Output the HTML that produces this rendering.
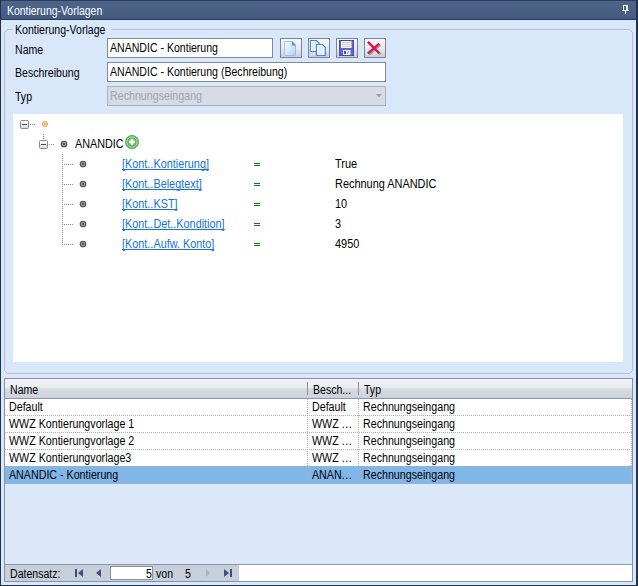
<!DOCTYPE html>
<html><head><meta charset="utf-8">
<style>
*{margin:0;padding:0;box-sizing:border-box}
html,body{width:638px;height:586px;overflow:hidden}
body{position:relative;background:#d8e8fa;font-family:"Liberation Sans",sans-serif;font-size:11px;color:#000}
.a{position:absolute}
.t{position:absolute;white-space:nowrap;font-size:12px;line-height:14px;transform:scaleX(0.88);transform-origin:0 0}
#title{left:0;top:0;width:638px;height:20px;background:linear-gradient(#4e6489,#435a80);border-top:1px solid #2c3d58}
#titleline{left:0;top:18px;width:638px;height:1px;background:#2a3a55}
#bl{left:0;top:0;width:1px;height:586px;background:#22324d}
#br{left:636px;top:0;width:2px;height:586px;background:#22324d}
#bb{left:0;top:585px;width:638px;height:1px;background:#22324d}
.grp{left:4px;top:29px;width:629px;height:345px;border:1px solid #b9bec6;border-radius:3px}
.inp{background:#fff;border:1px solid #7d8a9c}
.btn{width:22px;height:20px;border:1px solid #7b8595;background:linear-gradient(#f7f7f9 0%,#ececf0 50%,#c9ced7 100%)}
#tree{left:13px;top:114px;width:610px;height:248px;background:#fff}
.lnk{transform:scaleX(0.905)!important;color:#1473d8;text-decoration:underline;text-decoration-skip-ink:none}
.eq{color:#0a8a0a}
.dot{position:absolute;border-color:#8a8a8a}
</style></head><body>
<div id="title" class="a"></div>
<div class="a" style="left:0;top:19px;width:638px;height:1px;background:#2b3b57"></div>
<div class="t" style="left:7px;top:4px;color:#fff;transform:scaleX(0.87)">Kontierung-Vorlagen</div>
<!-- pin -->
<svg class="a" style="left:0;top:0" width="638" height="20">
<rect x="623" y="5" width="1" height="5" fill="#e8ecf2"/>
<rect x="626" y="5" width="2" height="5" fill="#e8ecf2"/>
<rect x="623" y="5" width="5" height="1" fill="#e8ecf2"/>
<rect x="622" y="10" width="7" height="1" fill="#f2f4f8"/>
<rect x="625" y="11" width="1" height="3" fill="#f2f4f8"/>
</svg>
<div id="bl" class="a"></div>
<div id="br" class="a"></div>
<div id="bb" class="a"></div>

<!-- group -->
<svg class="a" style="left:0;top:0" width="638" height="586"><path d="M4.5 32.5L7.5 29.5H629.5L632.5 32.5V370.5L629.5 373.5H7.5L4.5 370.5Z" fill="none" stroke="#bbbfc6" stroke-width="1"/></svg>
<div class="a" style="left:13px;top:24px;width:98px;height:12px;background:#d8e8fa"></div>
<div class="t" style="left:15px;top:23px">Kontierung-Vorlage</div>

<div class="t" style="left:15px;top:43px">Name</div>
<div class="t" style="left:15px;top:66px">Beschreibung</div>
<div class="t" style="left:15px;top:90px">Typ</div>

<div class="a inp" style="left:107px;top:38px;width:166px;height:20px"></div>
<div class="t" style="left:110px;top:41px">ANANDIC - Kontierung</div>
<div class="a inp" style="left:107px;top:62px;width:279px;height:20px"></div>
<div class="t" style="left:110px;top:65px">ANANDIC - Kontierung (Bechreibung)</div>
<div class="a" style="left:107px;top:86px;width:279px;height:20px;background:#d6dbe4;border:1px solid #aab2bd"></div>
<div class="t" style="left:110px;top:89px;color:#a0a6ae;transform:scaleX(0.89)">Rechnungseingang</div>
<svg class="a" style="left:376px;top:94px" width="7" height="5"><path d="M0 0H6L3 3.3Z" fill="#949daa"/></svg>

<div class="a btn" style="left:280px;top:38px"></div>
<div class="a btn" style="left:308px;top:38px"></div>
<div class="a btn" style="left:336px;top:38px"></div>
<div class="a btn" style="left:364px;top:38px"></div>
<svg class="a" style="left:0;top:0" width="638" height="586">
<defs>
<linearGradient id="pg" x1="0" y1="0" x2="1" y2="1"><stop offset="0" stop-color="#ffffff"/><stop offset="1" stop-color="#a9d3fb"/></linearGradient>
<linearGradient id="pg2" x1="0" y1="0" x2="1" y2="1"><stop offset="0" stop-color="#d7e9fc"/><stop offset="1" stop-color="#e9f3fd"/></linearGradient>
</defs>
<!-- new doc -->
<path d="M284.5 41.5h8l3 3v11h-11z" fill="url(#pg)" stroke="#a9c4ee" stroke-width="1"/>
<path d="M285 55.5h10.5V45" fill="none" stroke="#b8b0e6" stroke-width="1"/>
<path d="M292.3 41.6l3.1 3.1v0.8h-3.6v-3.9z" fill="#4b93e4"/>
<path d="M292 45.5h3.5" stroke="#b5a3e8" stroke-width="1"/>
<!-- copy -->
<path d="M310.5 40.5h6l2.5 2.5v8.5h-8.5z" fill="url(#pg2)" stroke="#4a82d6" stroke-width="1.2"/>
<path d="M311.5 50.5v-9h4.5" fill="none" stroke="#fff" stroke-width="0.9"/>
<path d="M316.5 44.5h6l2.8 2.8v8.2h-8.8z" fill="url(#pg2)" stroke="#4a82d6" stroke-width="1.2"/>
<path d="M317.6 54.4v-8.9h4.6" fill="none" stroke="#fff" stroke-width="0.9"/>
<!-- save -->
<rect x="339.5" y="40.5" width="14" height="15" fill="#5f64d6" stroke="#474bb0" stroke-width="1"/>
<rect x="341" y="41" width="10.5" height="7" fill="#f4f4ee"/>
<rect x="342" y="42" width="8.5" height="1" fill="#cfcfcf"/>
<rect x="342" y="44" width="8.5" height="1" fill="#cfcfcf"/>
<rect x="342" y="46" width="8.5" height="1" fill="#d8d8d8"/>
<rect x="343" y="50" width="7.5" height="5" fill="#f2f2ea"/>
<rect x="344" y="51" width="2" height="3" fill="#4b4fbf"/>
<path d="M347 54l2-3" stroke="#999" stroke-width="1"/>
<!-- delete -->
<path d="M368.2 42.2L379.6 53.6M379.6 43.9L368.2 53.6" stroke="#404030" stroke-opacity="0.4" stroke-width="2.2" transform="translate(0.9,0.9)"/>
<path d="M367.9 41.9L379.3 53.3M379.3 43.6L367.9 53.3" stroke="#df1349" stroke-width="2.3"/>
</svg>

<!-- tree -->
<div id="tree" class="a"></div>
<svg class="a" style="left:0;top:0" width="638" height="586">
<defs><linearGradient id="bx" x1="0" y1="0" x2="0" y2="1"><stop offset="0" stop-color="#fff"/><stop offset="0.5" stop-color="#f1f1f1"/><stop offset="1" stop-color="#d6d6d6"/></linearGradient><radialGradient id="gn" cx="0.5" cy="0.45" r="0.6"><stop offset="0" stop-color="#7cc878"/><stop offset="1" stop-color="#4fa34f"/></radialGradient></defs>
<path fill="#8c8c8c" d="M30 124h1v1h-1zM32 124h1v1h-1zM34 124h1v1h-1zM43 134h1v1h-1zM43 136h1v1h-1zM43 138h1v1h-1zM49 144h1v1h-1zM51 144h1v1h-1zM53 144h1v1h-1zM62 154h1v1h-1zM62 156h1v1h-1zM62 158h1v1h-1zM62 160h1v1h-1zM62 162h1v1h-1zM62 164h1v1h-1zM62 166h1v1h-1zM62 168h1v1h-1zM62 170h1v1h-1zM62 172h1v1h-1zM62 174h1v1h-1zM62 176h1v1h-1zM62 178h1v1h-1zM62 180h1v1h-1zM62 182h1v1h-1zM62 184h1v1h-1zM62 186h1v1h-1zM62 188h1v1h-1zM62 190h1v1h-1zM62 192h1v1h-1zM62 194h1v1h-1zM62 196h1v1h-1zM62 198h1v1h-1zM62 200h1v1h-1zM62 202h1v1h-1zM62 204h1v1h-1zM62 206h1v1h-1zM62 208h1v1h-1zM62 210h1v1h-1zM62 212h1v1h-1zM62 214h1v1h-1zM62 216h1v1h-1zM62 218h1v1h-1zM62 220h1v1h-1zM62 222h1v1h-1zM62 224h1v1h-1zM62 226h1v1h-1zM62 228h1v1h-1zM62 230h1v1h-1zM62 232h1v1h-1zM62 234h1v1h-1zM62 236h1v1h-1zM62 238h1v1h-1zM62 240h1v1h-1zM62 242h1v1h-1zM62 244h1v1h-1zM64 164h1v1h-1zM66 164h1v1h-1zM68 164h1v1h-1zM70 164h1v1h-1zM72 164h1v1h-1zM64 184h1v1h-1zM66 184h1v1h-1zM68 184h1v1h-1zM70 184h1v1h-1zM72 184h1v1h-1zM64 204h1v1h-1zM66 204h1v1h-1zM68 204h1v1h-1zM70 204h1v1h-1zM72 204h1v1h-1zM64 224h1v1h-1zM66 224h1v1h-1zM68 224h1v1h-1zM70 224h1v1h-1zM72 224h1v1h-1zM64 244h1v1h-1zM66 244h1v1h-1zM68 244h1v1h-1zM70 244h1v1h-1zM72 244h1v1h-1z"/>
<rect x="20.5" y="120.5" width="8" height="8" rx="1" fill="url(#bx)" stroke="#8a8a8a"/>
<rect x="22" y="124" width="5" height="1" fill="#2b4fa8"/>
<rect x="39.5" y="140.5" width="8" height="8" rx="1" fill="url(#bx)" stroke="#8a8a8a"/>
<rect x="41" y="144" width="5" height="1" fill="#2b4fa8"/>
<circle cx="45" cy="124" r="2.5" fill="#fcd7aa" stroke="#f0a04e" stroke-width="1"/>
<circle cx="45" cy="124" r="1" fill="#f3ac62"/>
<circle cx="64" cy="144" r="2.8" fill="#9c9c9c" stroke="#505050" stroke-width="1.1"/>
<circle cx="64" cy="144" r="1.1" fill="#4a4a4a"/>
<circle cx="83" cy="164" r="2.8" fill="#9c9c9c" stroke="#505050" stroke-width="1.1"/>
<circle cx="83" cy="164" r="1.1" fill="#4a4a4a"/>
<circle cx="83" cy="184" r="2.8" fill="#9c9c9c" stroke="#505050" stroke-width="1.1"/>
<circle cx="83" cy="184" r="1.1" fill="#4a4a4a"/>
<circle cx="83" cy="204" r="2.8" fill="#9c9c9c" stroke="#505050" stroke-width="1.1"/>
<circle cx="83" cy="204" r="1.1" fill="#4a4a4a"/>
<circle cx="83" cy="224" r="2.8" fill="#9c9c9c" stroke="#505050" stroke-width="1.1"/>
<circle cx="83" cy="224" r="1.1" fill="#4a4a4a"/>
<circle cx="83" cy="244" r="2.8" fill="#9c9c9c" stroke="#505050" stroke-width="1.1"/>
<circle cx="83" cy="244" r="1.1" fill="#4a4a4a"/>
<circle cx="132" cy="142" r="6.6" fill="url(#gn)" stroke="#58a858" stroke-width="0.9"/>
<circle cx="132" cy="142" r="5.2" fill="none" stroke="#c2e4bb" stroke-width="0.9"/>
<rect x="129" y="140.8" width="6" height="2.4" fill="#fff"/>
<rect x="130.8" y="139" width="2.4" height="6" fill="#fff"/>
</svg>

<div class="t" style="left:75px;top:137px;transform:scaleX(0.9)">ANANDIC</div>
<div class="t lnk" style="left:122px;top:157px">[Kont..Kontierung]</div>
<div class="t lnk" style="left:122px;top:177px">[Kont..Belegtext]</div>
<div class="t lnk" style="left:122px;top:197px">[Kont..KST]</div>
<div class="t lnk" style="left:122px;top:217px">[Kont..Det..Kondition]</div>
<div class="t lnk" style="left:122px;top:237px">[Kont..Aufw. Konto]</div>
<svg class="a" style="left:0;top:0" width="638" height="300"><rect x="254" y="163" width="6" height="1" fill="#008000"/><rect x="254" y="165" width="6" height="1" fill="#008000"/><rect x="254" y="183" width="6" height="1" fill="#008000"/><rect x="254" y="185" width="6" height="1" fill="#008000"/><rect x="254" y="203" width="6" height="1" fill="#008000"/><rect x="254" y="205" width="6" height="1" fill="#008000"/><rect x="254" y="223" width="6" height="1" fill="#008000"/><rect x="254" y="225" width="6" height="1" fill="#008000"/><rect x="254" y="243" width="6" height="1" fill="#008000"/><rect x="254" y="245" width="6" height="1" fill="#008000"/></svg>
<div class="t" style="left:335px;top:157px;transform:scaleX(0.91)">True</div>
<div class="t" style="left:335px;top:177px;transform:scaleX(0.91)">Rechnung ANANDIC</div>
<div class="t" style="left:335px;top:197px;transform:scaleX(0.91)">10</div>
<div class="t" style="left:335px;top:217px;transform:scaleX(0.91)">3</div>
<div class="t" style="left:335px;top:237px;transform:scaleX(0.91)">4950</div>


<!-- grid -->
<div class="a" style="left:4px;top:378px;width:629px;height:204px;border:1px solid #8792a4;background:#dae8f9"></div>
<div class="a" style="left:5px;top:379px;width:627px;height:19px;background:linear-gradient(#eff0f4 0px,#eceef2 8px,#d6dbe4 10px,#ccd2dc 19px)"></div>
<div class="a" style="left:5px;top:398px;width:627px;height:1px;background:#8a95a6"></div>
<div class="a" style="left:307px;top:382px;width:1px;height:13px;background:#8792a4"></div>
<div class="a" style="left:358px;top:382px;width:1px;height:13px;background:#8792a4"></div>
<div class="t" style="left:10px;top:383px">Name</div>
<div class="t" style="left:313px;top:383px">Besch...</div>
<div class="t" style="left:364px;top:383px">Typ</div>
<div class="a" style="left:5px;top:399px;width:627px;height:85px;background:#fff"></div>
<div class="a" style="left:5px;top:466px;width:627px;height:18px;background:#80b6e8"></div>
<div class="a" style="left:5px;top:415px;width:627px;height:1px;background:repeating-linear-gradient(90deg,#a9b0bb 0 1px,transparent 1px 2px)"></div>
<div class="a" style="left:5px;top:432px;width:627px;height:1px;background:repeating-linear-gradient(90deg,#a9b0bb 0 1px,transparent 1px 2px)"></div>
<div class="a" style="left:5px;top:449px;width:627px;height:1px;background:repeating-linear-gradient(90deg,#a9b0bb 0 1px,transparent 1px 2px)"></div>
<div class="a" style="left:5px;top:466px;width:627px;height:1px;background:repeating-linear-gradient(90deg,#a9b0bb 0 1px,transparent 1px 2px)"></div>
<div class="a" style="left:5px;top:483px;width:627px;height:1px;background:repeating-linear-gradient(90deg,#a9b0bb 0 1px,transparent 1px 2px)"></div>
<div class="a" style="left:307px;top:399px;width:1px;height:85px;background:repeating-linear-gradient(180deg,#a9b0bb 0 1px,transparent 1px 2px)"></div>
<div class="a" style="left:358px;top:399px;width:1px;height:85px;background:repeating-linear-gradient(180deg,#a9b0bb 0 1px,transparent 1px 2px)"></div>
<div class="a" style="left:631px;top:399px;width:1px;height:85px;background:repeating-linear-gradient(180deg,#a9b0bb 0 1px,transparent 1px 2px)"></div>
<div class="t" style="left:9px;top:400px;transform:scaleX(0.89)">Default</div>
<div class="t" style="left:312px;top:400px;transform:scaleX(0.89)">Default</div>
<div class="t" style="left:363px;top:400px;transform:scaleX(0.89)">Rechnungseingang</div>
<div class="t" style="left:9px;top:417px;transform:scaleX(0.89)">WWZ Kontierungvorlage 1</div>
<div class="t" style="left:312px;top:417px;transform:scaleX(0.89)">WWZ <span style="letter-spacing:0.6px">...</span></div>
<div class="t" style="left:363px;top:417px;transform:scaleX(0.89)">Rechnungseingang</div>
<div class="t" style="left:9px;top:434px;transform:scaleX(0.89)">WWZ Kontierungvorlage 2</div>
<div class="t" style="left:312px;top:434px;transform:scaleX(0.89)">WWZ <span style="letter-spacing:0.6px">...</span></div>
<div class="t" style="left:363px;top:434px;transform:scaleX(0.89)">Rechnungseingang</div>
<div class="t" style="left:9px;top:451px;transform:scaleX(0.89)">WWZ Kontierungvorlage3</div>
<div class="t" style="left:312px;top:451px;transform:scaleX(0.89)">WWZ <span style="letter-spacing:0.6px">...</span></div>
<div class="t" style="left:363px;top:451px;transform:scaleX(0.89)">Rechnungseingang</div>
<div class="t" style="left:9px;top:468px;transform:scaleX(0.89)">ANANDIC - Kontierung</div>
<div class="t" style="left:312px;top:468px;transform:scaleX(0.89)">ANAN<span style="letter-spacing:0.6px">...</span></div>
<div class="t" style="left:363px;top:468px;transform:scaleX(0.89)">Rechnungseingang</div>
<div class="a" style="left:5px;top:564px;width:627px;height:1px;background:#8a95a6"></div>
<div class="a" style="left:5px;top:565px;width:234px;height:16px;background:#c7cfdb"></div>
<div class="a" style="left:239px;top:565px;width:393px;height:16px;background:#fff"></div>
<div class="t" style="left:10px;top:567px">Datensatz:</div>
<svg class="a" style="left:0;top:0" width="638" height="586">
<path d="M75 569h2v8h-2z M83 569v8l-5-4z" fill="#3f5179"/>
<path d="M101 569v8l-5-4z" fill="#3f5179"/>
<path d="M206 569v8l4-4z" fill="#a9b1bd"/>
<path d="M224 569v8l5-4z M230 569h2v8h-2z" fill="#3f5179"/>
</svg>
<div class="a" style="left:110px;top:566px;width:43px;height:14px;background:#fff;border:1px solid #8792a4"></div>
<div class="t" style="left:146px;top:567px">5</div>
<div class="t" style="left:156px;top:567px">von</div>
<div class="t" style="left:185px;top:567px">5</div>

</body></html>
